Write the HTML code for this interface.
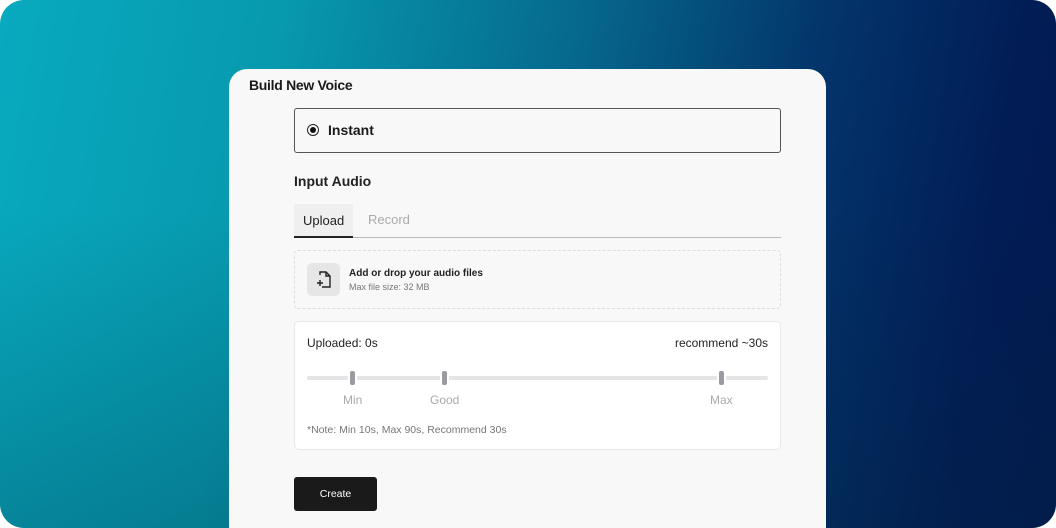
<!DOCTYPE html>
<html><head><style>
*{box-sizing:border-box;margin:0;padding:0}
html,body{width:1056px;height:528px;overflow:hidden}
body{background:#fff;font-family:"Liberation Sans",sans-serif;position:relative}
.bg{position:absolute;left:0;top:0;width:1056px;height:528px;border-radius:24px;overflow:hidden;
background:linear-gradient(100deg,#08aabf 0%,#0799ae 25%,#066a8e 50%,#03356b 72%,#021c55 90%,#02194f 100%)}
.bg:after{content:"";position:absolute;inset:0;background:linear-gradient(180deg,rgba(0,0,0,0) 40%,rgba(0,40,60,.25) 100%)}
.card{position:absolute;left:229px;top:69px;width:597px;height:459px;background:#f8f8f8;border-radius:18px 18px 0 0;z-index:2}
.abs{position:absolute}
</style></head><body>
<div class="bg"></div>
<div class="card">
<div class="abs" style="left:20px;top:8px;font-size:14px;font-weight:bold;color:#1a1a1a;letter-spacing:-.3px">Build New Voice</div>
<div class="abs" style="left:65px;top:39px;width:487px;height:45px;border:1px solid #555;border-radius:3px"></div>
<div class="abs" style="left:78px;top:55px;width:12px;height:12px;border:1.5px solid #222;border-radius:50%"></div>
<div class="abs" style="left:81px;top:58px;width:6px;height:6px;background:#111;border-radius:50%"></div>
<div class="abs" style="left:99px;top:53px;font-size:14px;font-weight:bold;color:#1a1a1a">Instant</div>
<div class="abs" style="left:65px;top:104px;font-size:14px;font-weight:bold;color:#222">Input Audio</div>
<div class="abs" style="left:65px;top:135px;width:59px;height:33px;background:#efefef"></div>
<div class="abs" style="left:74px;top:144px;font-size:13px;color:#222">Upload</div>
<div class="abs" style="left:139px;top:143px;font-size:13px;color:#aaa">Record</div>
<div class="abs" style="left:65px;top:168px;width:487px;height:1px;background:#bbb"></div>
<div class="abs" style="left:65px;top:167px;width:59px;height:2px;background:#222"></div>
<div class="abs" style="left:65px;top:181px;width:487px;height:59px;border:1px dashed #ddd;border-radius:4px"></div>
<div class="abs" style="left:78px;top:194px;width:33px;height:33px;background:#e6e6e6;border-radius:5px"></div>
<svg class="abs" style="left:86px;top:201px" width="18" height="20" viewBox="0 0 18 20" fill="none" stroke="#222" stroke-width="1.4"><path d="M5 5V2h6l4 4v11H7"/><path d="M11 2v4h4"/><path d="M5 10v6M2 13h6"/></svg>
<div class="abs" style="left:120px;top:199px;font-size:10px;font-weight:bold;color:#222">Add or drop your audio files</div>
<div class="abs" style="left:120px;top:213px;font-size:9px;color:#777">Max file size: 32 MB</div>
<div class="abs" style="left:65px;top:252px;width:487px;height:129px;background:#fff;border:1px solid #e8e8e8;border-radius:5px"></div>
<div class="abs" style="left:78px;top:267px;font-size:12px;color:#222">Uploaded: 0s</div>
<div class="abs" style="right:58px;top:267px;font-size:12px;color:#222">recommend ~30s</div>
<div class="abs" style="left:78px;top:307px;width:461px;height:4px;background:#e5e5e8;border-radius:2px"></div>
<div class="abs" style="left:121px;top:302px;width:5px;height:14px;background:#999ba0;border-radius:2px;box-shadow:0 0 0 2px #fff"></div>
<div class="abs" style="left:213px;top:302px;width:5px;height:14px;background:#999ba0;border-radius:2px;box-shadow:0 0 0 2px #fff"></div>
<div class="abs" style="left:490px;top:302px;width:5px;height:14px;background:#999ba0;border-radius:2px;box-shadow:0 0 0 2px #fff"></div>
<div class="abs" style="left:114px;top:324px;font-size:12px;color:#aaa">Min</div>
<div class="abs" style="left:201px;top:324px;font-size:12px;color:#aaa">Good</div>
<div class="abs" style="left:481px;top:324px;font-size:12px;color:#aaa">Max</div>
<div class="abs" style="left:78px;top:355px;font-size:10.5px;color:#777">*Note: Min 10s, Max 90s, Recommend 30s</div>
<div class="abs" style="left:65px;top:408px;width:83px;height:34px;background:#1a1a1a;border-radius:3px;color:#fff;font-size:10.5px;text-align:center;line-height:34px">Create</div>
</div>
</body></html>
